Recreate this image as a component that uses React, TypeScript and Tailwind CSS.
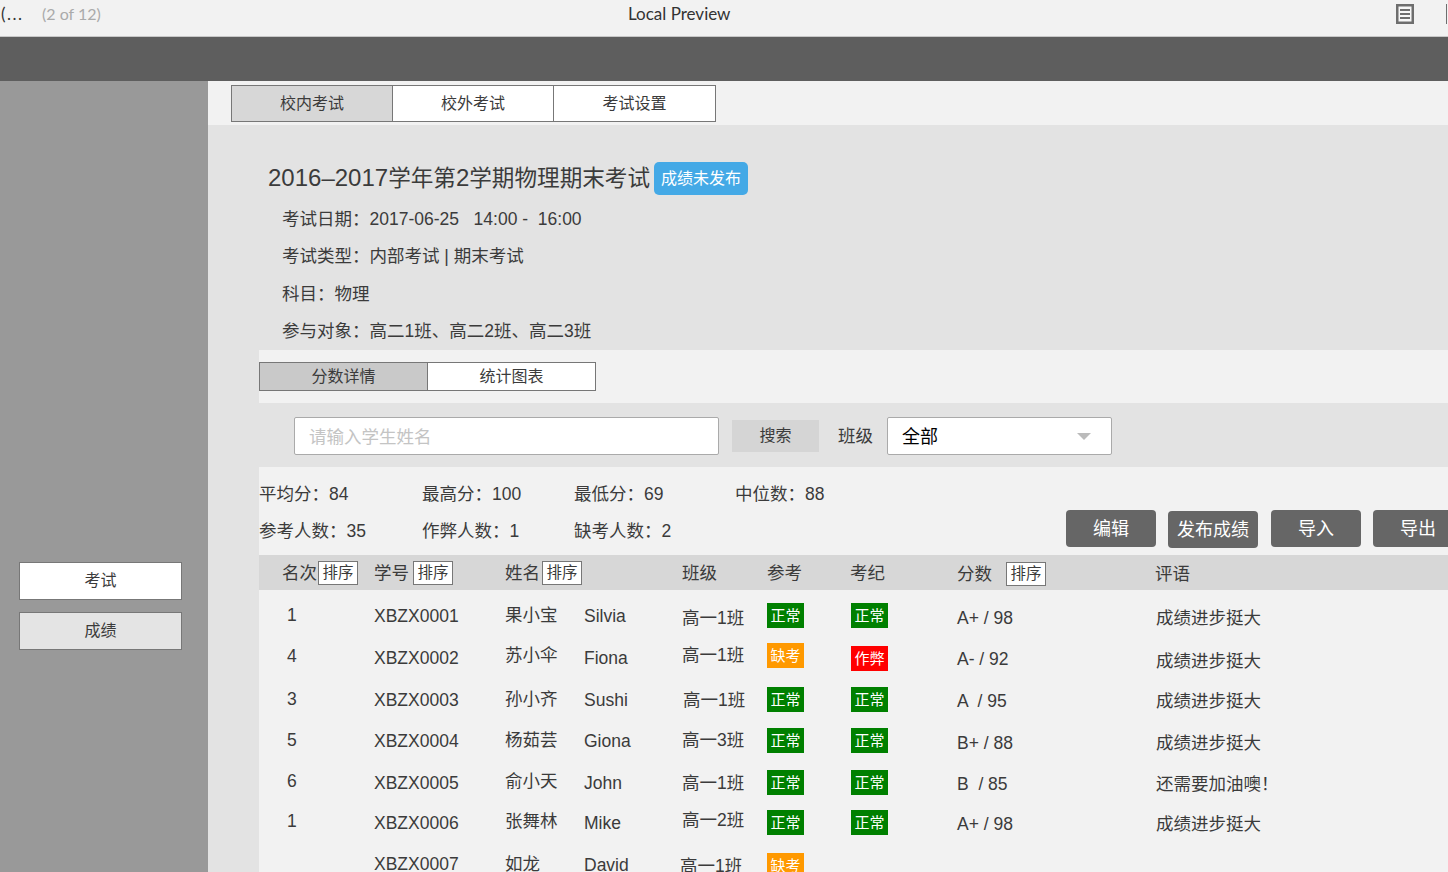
const rows = [
	{
		h: "h-[41px]", rank: "1", rankMt: "mt-[13px]", id: "XBZX0001", idMt: "mt-[14px]", cn: "果小宝", cnMt: "mt-[13px]", en: "Silvia", enMt: "mt-[14px]",
		cls: "高一1班", clsMt: "mt-[16px]", att: "正常", attMt: "mt-[13px]", disc: "正常", discMt: "mt-[13px]", score: "A+ / 98", scoreMt: "mt-[16px]", note: "成绩进步挺大", noteMt: "mt-[16px]",
	},
	{
		h: "h-[43px]", rank: "4", rankMt: "mt-[13px]", id: "XBZX0002", idMt: "mt-[15px]", cn: "苏小伞", cnMt: "mt-[12px]", en: "Fiona", enMt: "mt-[15px]",
		cls: "高一1班", clsMt: "mt-[12px]", att: "缺考", attMt: "mt-[12px]", disc: "作弊", discMt: "mt-[15px]", score: "A- / 92", scoreMt: "mt-[16px]", note: "成绩进步挺大", noteMt: "mt-[18px]",
	},
	{
		h: "h-[42px]", rank: "3", rankMt: "mt-[13px]", id: "XBZX0003", idMt: "mt-[14px]", cn: "孙小齐", cnMt: "mt-[13px]", en: "Sushi", enMt: "mt-[14px]",
		cls: "高一1班", clsMt: "mt-[14px] ml-[1px]", att: "正常", attMt: "mt-[13px]", disc: "正常", discMt: "mt-[13px]", score: "A  / 95", scoreMt: "mt-[15px]", note: "成绩进步挺大", noteMt: "mt-[15px]",
	},
	{
		h: "h-[41px]", rank: "5", rankMt: "mt-[12px]", id: "XBZX0004", idMt: "mt-[13px]", cn: "杨茹芸", cnMt: "mt-[12px]", en: "Giona", enMt: "mt-[13px]",
		cls: "高一3班", clsMt: "mt-[12px]", att: "正常", attMt: "mt-[12px]", disc: "正常", discMt: "mt-[12px]", score: "B+ / 88", scoreMt: "mt-[15px]", note: "成绩进步挺大", noteMt: "mt-[15px]",
	},
	{
		h: "h-[41px]", rank: "6", rankMt: "mt-[12px]", id: "XBZX0005", idMt: "mt-[14px]", cn: "俞小天", cnMt: "mt-[12px]", en: "John", enMt: "mt-[14px]",
		cls: "高一1班", clsMt: "mt-[14px]", att: "正常", attMt: "mt-[13px]", disc: "正常", discMt: "mt-[13px]", score: "B  / 85", scoreMt: "mt-[15px]", note: "还需要加油噢\uFF01", noteMt: "mt-[15px]",
	},
	{
		h: "h-[42px]", rank: "1", rankMt: "mt-[11px]", id: "XBZX0006", idMt: "mt-[13px]", cn: "张舞林", cnMt: "mt-[11px]", en: "Mike", enMt: "mt-[13px]",
		cls: "高一2班", clsMt: "mt-[10px]", att: "正常", attMt: "mt-[12px]", disc: "正常", discMt: "mt-[12px]", score: "A+ / 98", scoreMt: "mt-[14px]", note: "成绩进步挺大", noteMt: "mt-[14px]",
	},
	{
		h: "h-[42px]", rank: "", rankMt: "", id: "XBZX0007", idMt: "mt-[12px]", cn: "如龙", cnMt: "mt-[12px]", en: "David", enMt: "mt-[13px]",
		cls: "高一1班", clsMt: "mt-[14px] -ml-[2px]", att: "缺考", attMt: "mt-[13px]", disc: "", discMt: "", score: "", scoreMt: "", note: "", noteMt: "",
	},
];

const gridCols = "grid grid-cols-[116px_130px_80px_97px_85px_84px_106px_199px_1fr]";
const colon = "\uFF1A";

const Badge = ({ text, className }: { text: string; className: string }) => {
	if (!text) return <div />;
	const bg = text === "正常" ? "bg-[#008000]" : text === "缺考" ? "bg-[#ff9900]" : "bg-[#ff0000]";
	return (
		<div className={`flex h-[25px] w-[37px] items-center justify-center text-[15px] text-white ${bg} ${className}`}>
			{text}
		</div>
	);
};

const SortBox = ({ className }: { className: string }) => (
	<span className={`flex h-[24px] w-[40px] items-center justify-center border border-[#777] bg-white text-[15.5px] ${className}`}>
		排序
	</span>
);

const Tab = ({ text, active, className }: { text: string; active?: boolean; className: string }) => (
	<div className={`flex items-center justify-center border border-[#777] text-[16px] ${active ? "" : "bg-white"} ${className}`}>
		{text}
	</div>
);

export default function App() {
	return (
		<div className="flex h-[872px] w-[1448px] flex-col overflow-hidden bg-[#f2f2f2] text-[17.5px] leading-[24px] text-[#3b3b3b] [font-family:'Liberation_Sans','Noto_Sans_CJK_SC',sans-serif]">
			{/* Preview title bar */}
			<div className="flex h-[37px] shrink-0 items-center border-b border-[#c8c8c8] bg-[#f2f2f2] pb-[8px] text-[17px] [font-family:'Lato','Noto_Sans_CJK_SC',sans-serif]">
				<span className="ml-[1px] w-[41px] tracking-[1.5px] text-[#333]">(...</span>
				<span className="w-[586px] text-[16px] text-[#aaa]">(2 of 12)</span>
				<span className="w-[768px] text-[#333]">Local Preview</span>
				<svg width="18" height="20" viewBox="0 0 18 20" className="mr-[32px] shrink-0">
					<rect x="1.25" y="1.25" width="15.5" height="17.5" fill="#f7f7f7" stroke="#6e6e6e" strokeWidth="2.5" />
					<rect x="4" y="5" width="10" height="2" fill="#6e6e6e" />
					<rect x="4" y="9" width="10" height="2" fill="#6e6e6e" />
					<rect x="4" y="13" width="10" height="2" fill="#6e6e6e" />
				</svg>
				<div className="h-[20px] w-[1px] shrink-0 bg-[#6e6e6e]" />
			</div>

			<div className="h-[44px] shrink-0 bg-[#5e5e5e]" />

			<div className="flex min-h-0 flex-1">
				{/* Sidebar */}
				<aside className="flex w-[208px] shrink-0 flex-col gap-[12px] bg-[#999] pt-[481px] pl-[19px] text-[16px]">
					<div className="flex h-[38px] w-[163px] items-center justify-center border border-[#777] bg-white">考试</div>
					<div className="flex h-[38px] w-[163px] items-center justify-center border border-[#777] bg-[#e4e4e4]">成绩</div>
				</aside>

				<main className="flex min-w-0 flex-1 flex-col">
					<div className="flex h-[44px] shrink-0 pt-[4px] pl-[23px]">
						<Tab text="校内考试" active className="h-[37px] w-[162px] bg-[#d7d7d7]" />
						<Tab text="校外考试" className="-ml-px h-[37px] w-[162px]" />
						<Tab text="考试设置" className="-ml-px h-[37px] w-[163px]" />
					</div>

					<div className="flex min-h-0 flex-1 flex-col bg-[#e3e3e3] pl-[51px]">
						{/* Exam info */}
						<section className="h-[225px] shrink-0 pt-[37px]">
							<div className="flex items-center pl-[9px]">
								<h1 className="text-[22.6px] font-normal">
									<span className="text-[24px]">2016–2017</span>学年第<span className="text-[24px]">2</span>学期物理期末考试
								</h1>
								<span className="ml-[4px] flex h-[33px] w-[94px] items-center justify-center rounded-[5px] bg-[#44a9e6] text-[16px] text-white">
									成绩未发布
								</span>
							</div>
							<div className="mt-[12px] flex flex-col pl-[23px]">
								<p className="whitespace-pre">{`考试日期${colon}2017-06-25   14:00 -  16:00`}</p>
								<p className="mt-[13px]">{`考试类型${colon}内部考试 | 期末考试`}</p>
								<p className="mt-[14px]">{`科目${colon}物理`}</p>
								<p className="mt-[13px]">{`参与对象${colon}高二1班、高二2班、高二3班`}</p>
							</div>
						</section>

						<div className="h-[53px] shrink-0 bg-[#f2f2f2] pt-[12px]">
							<div className="flex">
								<Tab text="分数详情" active className="h-[29px] w-[169px] bg-[#c9c9c9]" />
								<Tab text="统计图表" className="-ml-px h-[29px] w-[169px]" />
							</div>
						</div>

						{/* Search */}
						<div className="flex h-[64px] shrink-0 items-center pt-[2px] pl-[35px]">
							<div className="flex h-[38px] w-[425px] items-center rounded-[2px] border border-[#aaa] bg-white pt-[1px] pl-[14px] text-[17.5px] text-[#c4c4c4]">
								请输入学生姓名
							</div>
							<div className="ml-[13px] flex h-[32px] w-[87px] items-center justify-center bg-[#d5d5d5] text-[16px]">搜索</div>
							<span className="ml-[19px]">班级</span>
							<div className="ml-[14px] flex h-[38px] w-[225px] items-center justify-between rounded-[2px] border border-[#aaa] bg-white pr-[20px] pl-[14px] text-[18px] text-black">
								<span className="pt-[1px]">全部</span>
								<span className="h-0 w-0 border-x-[7px] border-t-[7px] border-x-transparent border-t-[#bbb]" />
							</div>
						</div>

						{/* Stats and actions */}
						<div className="flex h-[88px] shrink-0 bg-[#f2f2f2] pt-[15px]">
							<div className="grid w-[807px] shrink-0 grid-cols-[163px_152px_161px_1fr] content-start gap-y-[13px]">
								<span>{`平均分${colon}84`}</span>
								<span>{`最高分${colon}100`}</span>
								<span>{`最低分${colon}69`}</span>
								<span>{`中位数${colon}88`}</span>
								<span>{`参考人数${colon}35`}</span>
								<span>{`作弊人数${colon}1`}</span>
								<span>{`缺考人数${colon}2`}</span>
							</div>
							<div className="flex shrink-0 items-start gap-[12px] pt-[28px] text-[18px] text-white">
								<button className="h-[37px] w-[90px] rounded-[4px] bg-[#666]">编辑</button>
								<button className="mt-[1px] h-[37px] w-[90px] rounded-[4px] bg-[#666]">发布成绩</button>
								<button className="ml-[1px] h-[37px] w-[90px] rounded-[4px] bg-[#666]">导入</button>
								<button className="h-[37px] w-[90px] shrink-0 rounded-[4px] bg-[#666]">导出</button>
							</div>
						</div>

						{/* Score table */}
						<div className={`${gridCols} h-[35px] shrink-0 items-center bg-[#d7d7d7]`}>
							<div className="flex items-center pl-[23px]">名次<SortBox className="ml-[1px]" /></div>
							<div className="-ml-[1px] flex items-center">学号<SortBox className="ml-[4px]" /></div>
							<div className="col-span-2 flex items-center">姓名<SortBox className="ml-[2px]" /></div>
							<div>班级</div>
							<div>参考</div>
							<div className="-ml-[1px]">考纪</div>
							<div className="flex items-center pt-[2px]">分数<SortBox className="ml-[14px]" /></div>
							<div className="-ml-[1px] pt-[2px]">评语</div>
						</div>

						<div className="min-h-0 flex-1 bg-[#f2f2f2]">
							{rows.map((r) => (
								<div key={r.id} className={`${gridCols} ${r.h} items-start`}>
									<div className={`pl-[28px] ${r.rankMt}`}>{r.rank}</div>
									<div className={`-ml-[1px] ${r.idMt}`}>{r.id}</div>
									<div className={r.cnMt}>{r.cn}</div>
									<div className={`-ml-[1px] ${r.enMt}`}>{r.en}</div>
									<div className={r.clsMt}>{r.cls}</div>
									<Badge text={r.att} className={r.attMt} />
									<Badge text={r.disc} className={r.discMt} />
									<div className={`whitespace-pre ${r.scoreMt}`}>{r.score}</div>
									<div className={r.noteMt}>{r.note}</div>
								</div>
							))}
						</div>
					</div>
				</main>
			</div>
		</div>
	);
}
